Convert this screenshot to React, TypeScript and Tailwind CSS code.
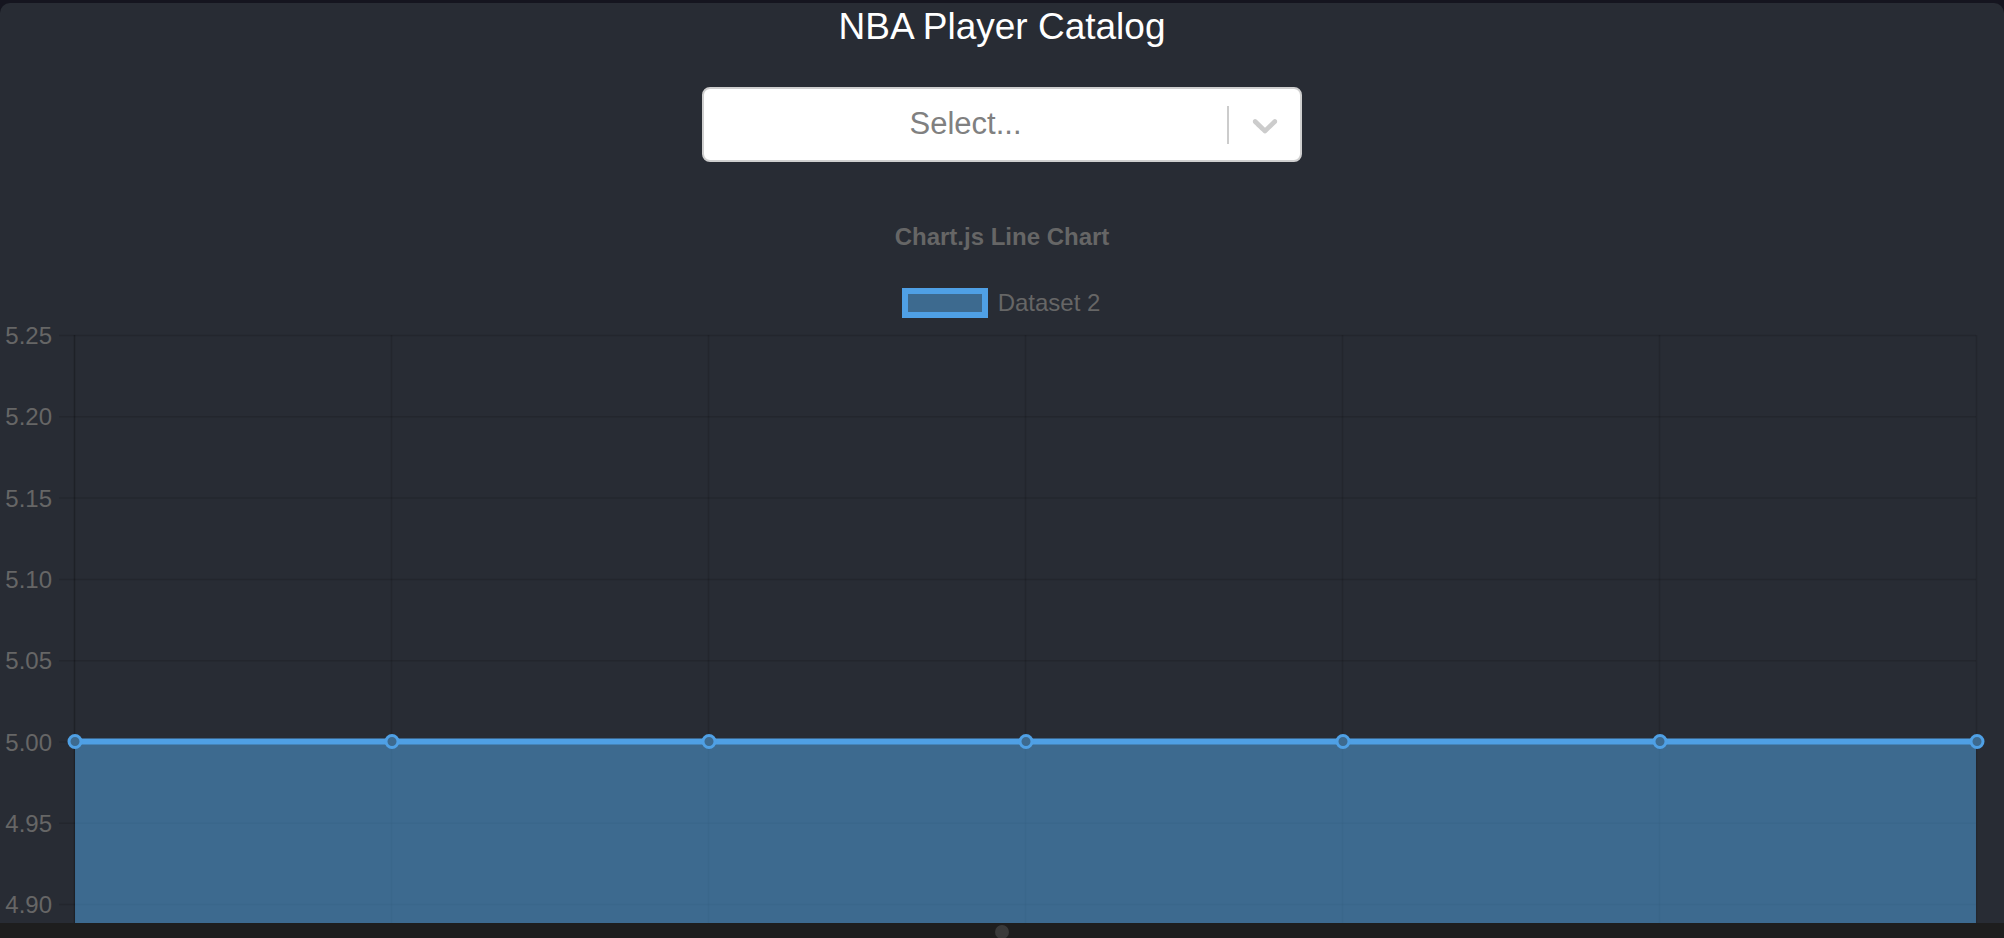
import React from 'react'

const ticks = ['5.25', '5.20', '5.15', '5.10', '5.05', '5.00', '4.95', '4.90']

// chart geometry, in svg coordinates
const PLOT_LEFT = 75
const PLOT_RIGHT = 1976
const TOP_Y = 17
const STEP_Y = 81.3
const STEP_X = 317
const VALUE_Y = TOP_Y + STEP_Y * 5
const CHART_H = 605

function ChevronDown() {
  return (
    <svg width="42" height="42" viewBox="0 0 20 20" fill="#cccccc" aria-hidden="true">
      <path d="M4.516 7.548c0.436-0.446 1.043-0.481 1.576 0l3.908 3.747 3.908-3.747c0.533-0.481 1.141-0.446 1.574 0 0.436 0.445 0.408 1.197 0 1.615-0.406 0.418-4.695 4.502-4.695 4.502-0.217 0.223-0.502 0.335-0.787 0.335s-0.57-0.112-0.789-0.335c0 0-4.287-4.084-4.695-4.502s-0.436-1.17 0-1.615z" />
    </svg>
  )
}

function PlayerSelect() {
  return (
    <div className="mt-[39px] flex h-[75px] w-[600px] items-center rounded-[8px] border-2 border-[#cfcfcf] bg-white">
      <div className="flex flex-1 items-center justify-center text-[31px] text-[#808080]">Select...</div>
      <div className="h-[38px] w-[2px] bg-[#cccccc]" />
      <div className="flex w-[71px] items-center justify-center">
        <ChevronDown />
      </div>
    </div>
  )
}

function LineChart() {
  const xs = Array.from({ length: 7 }, (_, i) => PLOT_LEFT - 0.5 + i * STEP_X)

  return (
    <svg width="2004" height={CHART_H} className="block">
      {/* horizontal grid */}
      {ticks.map((t, i) => {
        const y = TOP_Y + i * STEP_Y + 0.5
        return (
          <g key={t}>
            <line x1={59} x2={PLOT_RIGHT} y1={y} y2={y} stroke="rgba(0,0,0,0.12)" strokeWidth={1.5} />
            <text
              x={52}
              y={y + 8.5}
              textAnchor="end"
              fontSize={24}
              fill="#666666"
              fontFamily="'Liberation Sans', Arial, sans-serif"
            >
              {t}
            </text>
          </g>
        )
      })}

      {/* vertical grid */}
      {xs.map((x, i) => (
        <line
          key={x}
          x1={x}
          x2={x}
          y1={TOP_Y}
          y2={CHART_H}
          stroke={i === 0 ? 'rgba(0,0,0,0.25)' : 'rgba(0,0,0,0.12)'}
          strokeWidth={1.5}
        />
      ))}

      {/* dataset fill */}
      <rect
        x={PLOT_LEFT}
        y={VALUE_Y}
        width={PLOT_RIGHT - PLOT_LEFT}
        height={CHART_H - VALUE_Y}
        fill="rgba(82,168,234,0.5)"
      />

      {/* dataset line */}
      <line x1={PLOT_LEFT} x2={PLOT_RIGHT} y1={VALUE_Y} y2={VALUE_Y} stroke="#4fa0e5" strokeWidth={6} />

      {xs.map((x) => (
        <circle key={x} cx={x + 0.5} cy={VALUE_Y} r={6} fill="#3d6a8f" stroke="#4fa0e5" strokeWidth={3} />
      ))}
    </svg>
  )
}

export default function App() {
  return (
    <div
      className="flex h-[938px] w-full flex-col overflow-hidden bg-[#15151f]"
      style={{ fontFamily: "'Liberation Sans', Arial, Helvetica, sans-serif" }}
    >
      <div className="mt-[3px] flex flex-1 flex-col items-center rounded-t-[10px] bg-[#282c34]">
        <h1 className="mt-[2px] text-[37px] leading-[43px] text-white">NBA Player Catalog</h1>

        <PlayerSelect />

        {/* Chart header */}
        <div className="mt-[60px] text-[24px] font-bold leading-[29px] text-[#666666]">Chart.js Line Chart</div>
        <div className="mt-[37px] flex h-[30px] items-center gap-[10px] pr-[2px]">
          <div className="h-[30px] w-[86px] border-[6px] border-[#4fa0e5] bg-[#3d6a8f]" />
          <span className="text-[24px] leading-[30px] text-[#666666]">Dataset 2</span>
        </div>

        <LineChart />
      </div>

      {/* window bottom edge */}
      <div className="flex h-[15px] justify-center overflow-hidden bg-[#1e1e1e]">
        <div className="mt-[2px] h-[14px] w-[14px] rounded-full bg-[#3a3a3a]" />
      </div>
    </div>
  )
}
